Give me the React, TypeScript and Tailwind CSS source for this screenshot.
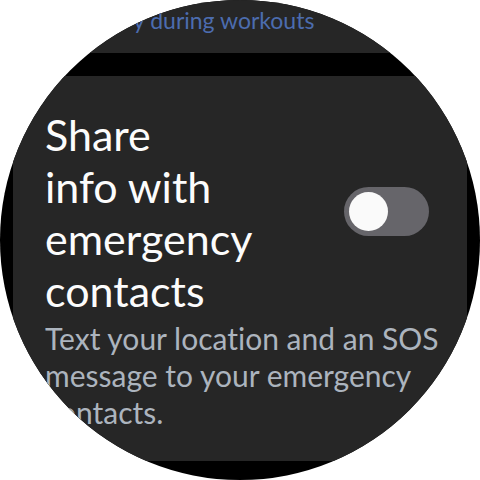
import { useState } from "react";

function PreviousCard() {
  return (
    <section className="h-[53px] bg-[#262626] pt-1 pl-[120px]">
      <p className="text-[23px] leading-8 whitespace-nowrap text-[#4c6cae]">y during workouts</p>
    </section>
  );
}

function ShareInfoCard() {
  const [shared, setShared] = useState(false);

  return (
    <section className="rounded-lg bg-[#262626] pt-[33px] pr-7 pb-[30px] pl-8">
      <div className="flex items-center justify-between pr-[10px]">
        <label htmlFor="share-info" className="w-[220px] text-[43px] leading-[52px] text-[#fcfcfc]">
          Share
          <br />
          info with emergency contacts
        </label>
        <input
          id="share-info"
          type="checkbox"
          role="switch"
          aria-describedby="share-info-description"
          checked={shared}
          onChange={(event) => setShared(event.target.checked)}
          className="mb-[3px] flex h-[49px] w-[85px] shrink-0 appearance-none items-center rounded-full bg-[#66656a] px-[5px] before:size-[39px] before:rounded-full before:bg-[#fafafa] checked:justify-end checked:bg-[#48659f]"
        />
      </div>
      <p id="share-info-description" className="mt-[3px] text-[30px] leading-[37px] text-[#acb4be]">
        Text your location and an SOS message to your emergency contacts.
      </p>
    </section>
  );
}

export default function App() {
  return (
    <div className="min-h-screen bg-white font-['Lato','Roboto',sans-serif] [font-variant-ligatures:none]">
      <main className="flex aspect-square w-full flex-col gap-[23px] overflow-hidden rounded-full bg-black px-[13px]">
        <PreviousCard />
        <ShareInfoCard />
      </main>
    </div>
  );
}
